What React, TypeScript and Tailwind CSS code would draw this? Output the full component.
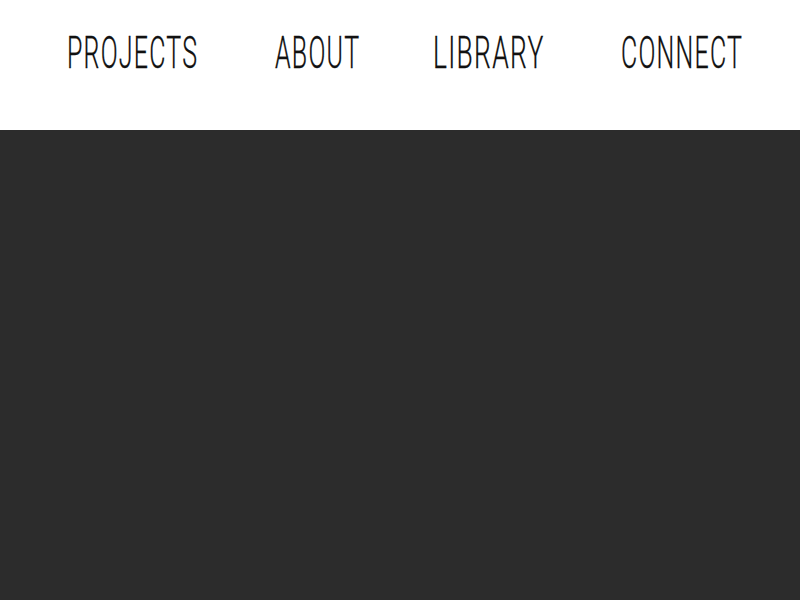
import React from 'react';

const NAV_ITEMS = [
  { label: 'PROJECTS', width: 'w-[131px]', text: 'scale-x-[0.567]' },
  { label: 'ABOUT', width: 'w-[84px]', text: 'scale-x-[0.567]' },
  { label: 'LIBRARY', width: 'w-[109px]', text: 'scale-x-[0.6] -translate-x-[2px]' },
  { label: 'CONNECT', width: 'w-[121px]', text: 'scale-x-[0.567]' },
];

export default function App() {
  return (
    <div className="min-h-screen flex flex-col bg-[#2c2c2c]">
      {/* Top navigation */}
      <header className="h-[130px] bg-white pt-[31px] pl-[67px] pr-[58px]">
        <nav className="flex justify-between">
          {NAV_ITEMS.map((item) => (
            <a key={item.label} href="#" className={`${item.width} block overflow-visible whitespace-nowrap`}>
              <span
                className={`${item.text} inline-block origin-left text-[44px] leading-[44px] tracking-[0.05em] text-[#111] font-['Roboto',sans-serif] font-light [-webkit-text-stroke:0.3px_#111]`}
              >
                {item.label}
              </span>
            </a>
          ))}
        </nav>
      </header>

      {/* Main area */}
      <main className="flex-1 bg-[#2c2c2c]" />
    </div>
  );
}
